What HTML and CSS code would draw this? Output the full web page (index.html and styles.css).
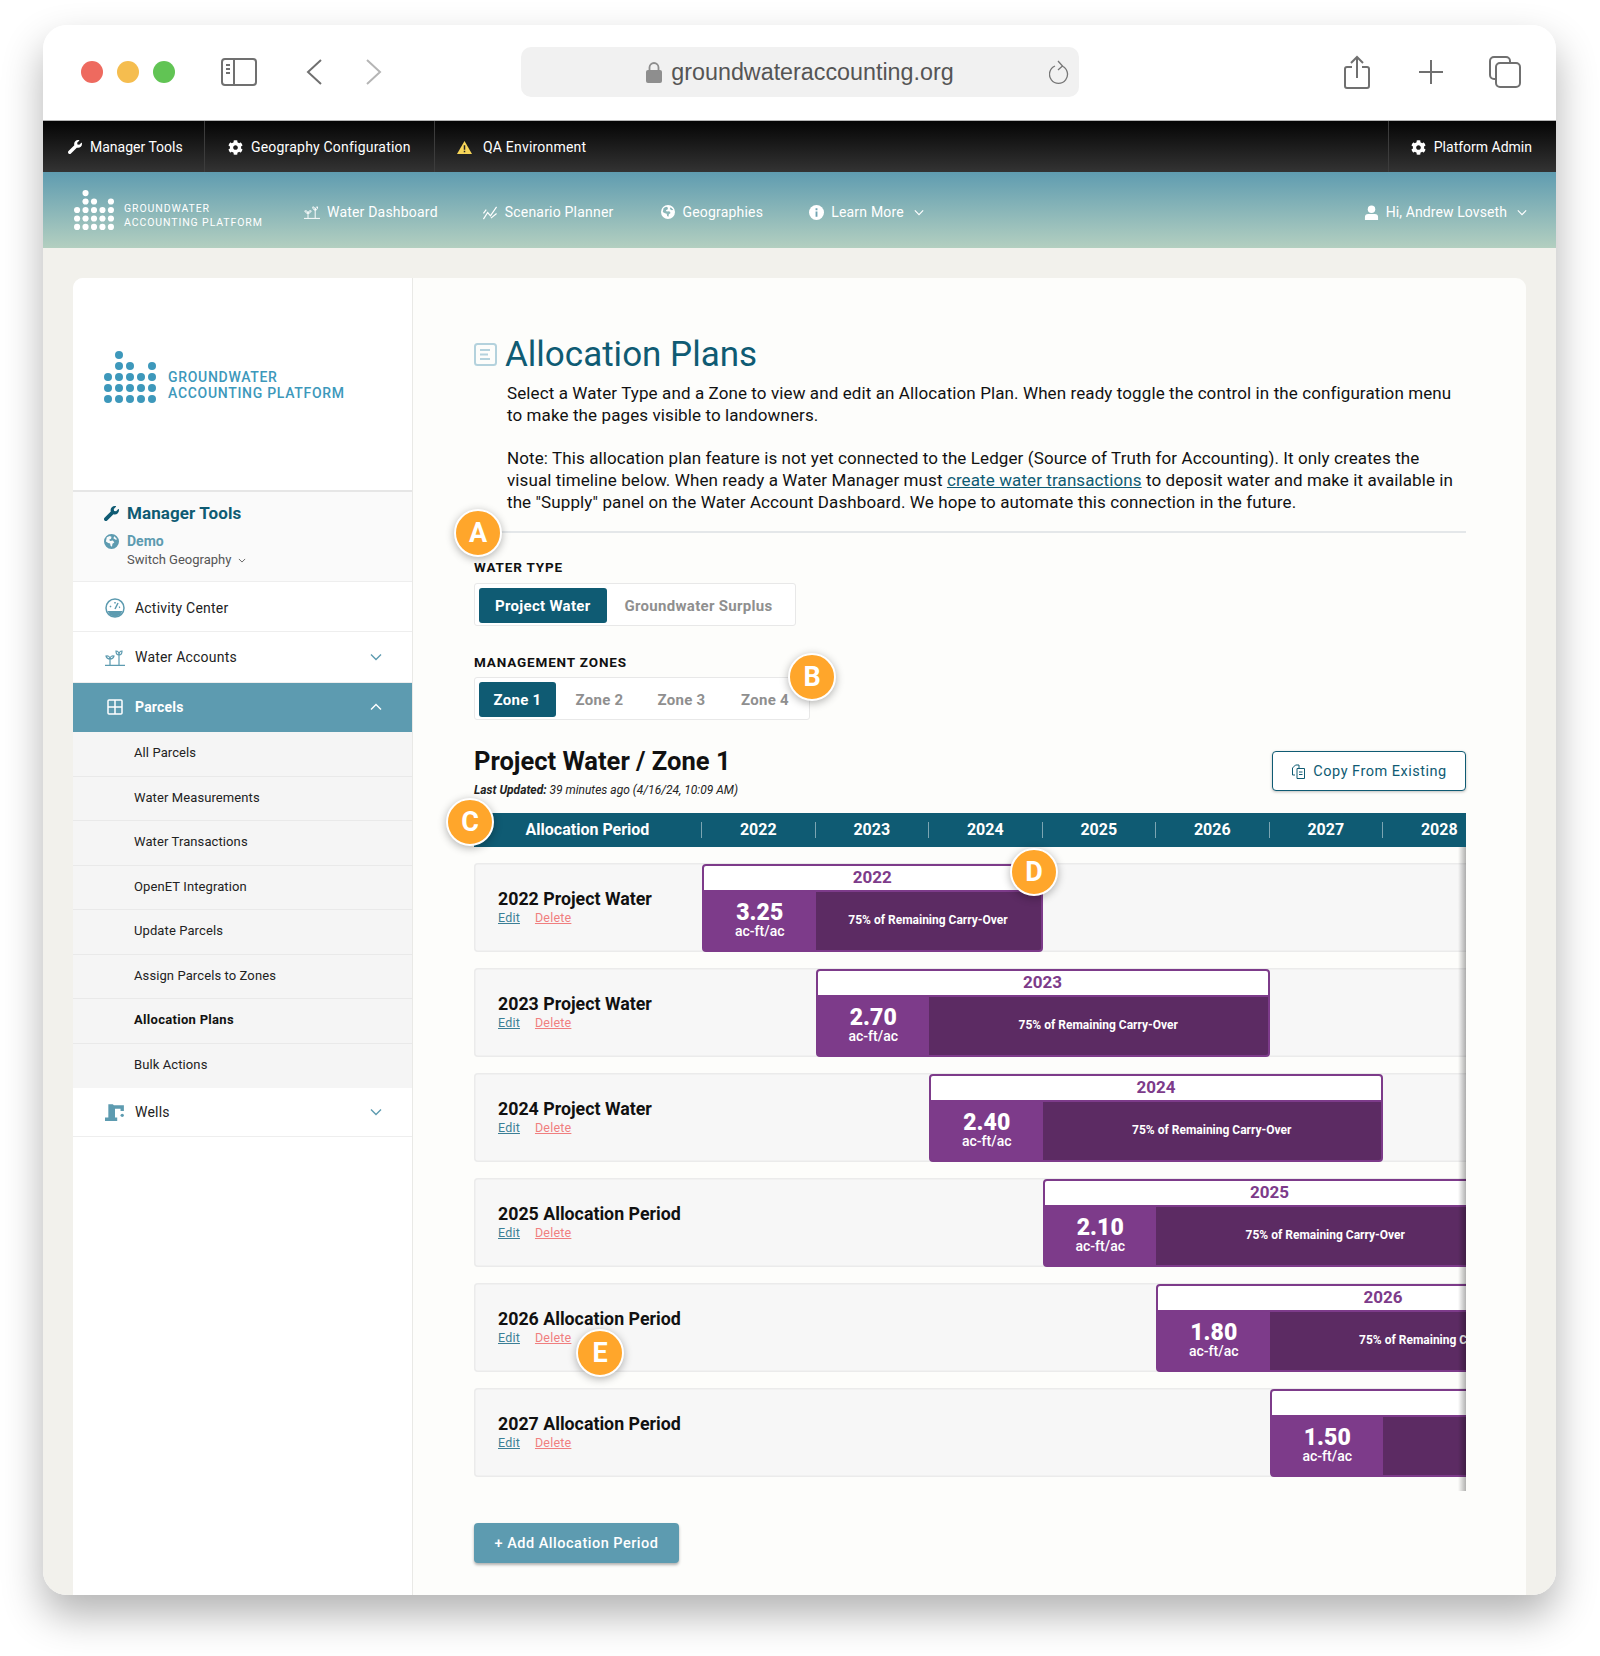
FILE: index.html

```html
<!DOCTYPE html>
<html lang="en">
<head>
  <meta charset="UTF-8">
  <title>Allocation Plans</title>
  <link rel="stylesheet" href="styles.css">
</head>
<body>
  <svg class="defs" width="0" height="0">
    <symbol id="dots" viewBox="0 0 52 52">
      <circle cx="15" cy="4" r="4"/>
      <circle cx="15" cy="15" r="4"/><circle cx="26" cy="15" r="4"/><circle cx="48" cy="15" r="4"/>
      <circle cx="4" cy="26" r="4"/><circle cx="15" cy="26" r="4"/><circle cx="26" cy="26" r="4"/><circle cx="37" cy="26" r="4"/><circle cx="48" cy="26" r="4"/>
      <circle cx="4" cy="37" r="4"/><circle cx="15" cy="37" r="4"/><circle cx="26" cy="37" r="4"/><circle cx="37" cy="37" r="4"/><circle cx="48" cy="37" r="4"/>
      <circle cx="4" cy="48" r="4"/><circle cx="15" cy="48" r="4"/><circle cx="26" cy="48" r="4"/><circle cx="37" cy="48" r="4"/><circle cx="48" cy="48" r="4"/>
    </symbol>
    <symbol id="wrench" viewBox="0 0 512 512">
      <path d="M507.73 109.1c-2.24-9.03-13.54-12.09-20.12-5.51l-74.36 74.36-67.88-11.31-11.31-67.88 74.36-74.36c6.62-6.62 3.43-17.9-5.66-20.16-47.38-11.74-99.55.91-136.58 37.93-39.64 39.64-50.55 97.1-34.05 147.2L18.74 402.76c-24.99 24.99-24.99 65.51 0 90.5 24.99 24.99 65.51 24.99 90.5 0l213.21-213.21c50.12 16.71 107.47 5.68 147.37-34.22 37.07-37.07 49.7-89.32 37.91-136.73z"/>
    </symbol>
    <symbol id="gear" viewBox="0 0 512 512">
      <path d="M487.4 315.7l-42.6-24.6c4.3-23.2 4.3-47 0-70.2l42.6-24.6c4.9-2.8 7.1-8.6 5.5-14-11.1-35.6-30-67.8-54.7-94.6-3.8-4.1-10-5.1-14.8-2.3L380.8 110c-17.9-15.4-38.5-27.3-60.8-35.1V25.8c0-5.6-3.9-10.5-9.4-11.7-36.7-8.2-74.3-7.8-109.2 0-5.5 1.2-9.4 6.1-9.4 11.7V75c-22.2 7.9-42.8 19.8-60.8 35.1L88.7 85.5c-4.9-2.8-11-1.9-14.8 2.3-24.7 26.7-43.6 58.9-54.7 94.6-1.7 5.4.6 11.2 5.5 14L67.3 221c-4.3 23.2-4.3 47 0 70.2l-42.6 24.6c-4.9 2.8-7.1 8.6-5.5 14 11.1 35.6 30 67.8 54.7 94.6 3.8 4.1 10 5.1 14.8 2.3l42.6-24.6c17.9 15.4 38.5 27.3 60.8 35.1v49.2c0 5.6 3.9 10.5 9.4 11.7 36.7 8.2 74.3 7.8 109.2 0 5.5-1.2 9.4-6.1 9.4-11.7v-49.2c22.2-7.9 42.8-19.8 60.8-35.1l42.6 24.6c4.9 2.8 11 1.9 14.8-2.3 24.7-26.7 43.6-58.9 54.7-94.6 1.5-5.5-.7-11.3-5.6-14.1zM256 336c-44.1 0-80-35.9-80-80s35.9-80 80-80 80 35.9 80 80-35.9 80-80 80z"/>
    </symbol>
    <symbol id="sprout" viewBox="0 0 20 16">
      <g fill="none" stroke="currentColor" stroke-width="1.200">
        <path d="M0 15.400h20M5 15V8M14 15V4"/>
        <path d="M5 9C3 9 1.500 8 1 6c2-.5 4 .5 4 3zM5 9c2 0 3.500-1 4-3-2-.5-4 .5-4 3zM14 5c-2 0-3-1.500-3-4 2 0 3 1.500 3 4zM14 5c2 0 3-1.500 3-4-2 0-3 1.500-3 4z"/>
      </g>
    </symbol>
    <symbol id="chart" viewBox="0 0 16 16">
      <path d="M1 15l4.500-7 3 3.500L15 2M1 9l3-4M9 14l6-5" fill="none" stroke="currentColor" stroke-width="1.300"/>
    </symbol>
    <symbol id="globe" viewBox="0 0 16 16">
      <path fill-rule="evenodd" d="M8 0a8 8 0 1 1 0 16A8 8 0 0 1 8 0zM3 3.500L2 8l2.500 1.500 2 .5.500 2.500 1.500 1 .5-3 2-1.500-1.500-2-3 .5-1-1.500 2-1 .5-2-2-1zM11 2.500l-1 2 2.500 1.500 1.500-.5z"/>
    </symbol>
    <symbol id="chevron" viewBox="0 0 12 8">
      <path d="M1 1.500l5 5 5-5" fill="none" stroke="currentColor" stroke-width="1.400"/>
    </symbol>
  </svg>

  <div class="window">
    <div class="chrome">
      <span class="light light-red"></span>
      <span class="light light-yellow"></span>
      <span class="light light-green"></span>
      <svg class="chrome-sidebar" width="36" height="28" viewBox="0 0 36 28" fill="none" stroke="#707070" stroke-width="2">
        <rect x="1" y="1" width="34" height="26" rx="3"/>
        <path d="M13 1v26M5 7h4M5 11h4M5 15h4"/>
      </svg>
      <svg class="chrome-back" width="16" height="26" viewBox="0 0 16 26" fill="none" stroke="#707070" stroke-width="2"><path d="M15 1L2 13l13 12"/></svg>
      <svg class="chrome-forward" width="16" height="26" viewBox="0 0 16 26" fill="none" stroke="#b5b5b5" stroke-width="2"><path d="M1 1l13 12L1 25"/></svg>
      <div class="address">
        <svg width="16" height="21" viewBox="0 0 16 21" fill="#8e8e8e"><rect y="8" width="16" height="13" rx="2"/><path d="M3.500 9V5.500a4.500 4.500 0 0 1 9 0V9" fill="none" stroke="#8e8e8e" stroke-width="1.800"/></svg>
        <span>groundwateraccounting.org</span>
        <svg class="reload" width="20" height="24" viewBox="0 0 20 24" fill="none" stroke="#777" stroke-width="1.300"><path d="M13 6a9 9 0 1 1-7 0M9 1l4.500 5L9 10"/></svg>
      </div>
      <div class="chrome-actions">
        <svg width="26" height="34" viewBox="0 0 26 34" fill="none" stroke="#707070" stroke-width="2"><path d="M8 12H3a2 2 0 0 0-2 2v17a2 2 0 0 0 2 2h20a2 2 0 0 0 2-2V14a2 2 0 0 0-2-2h-5M13 23V2M7 8l6-6 6 6"/></svg>
        <svg class="chrome-plus" width="26" height="26" viewBox="0 0 26 26" stroke="#707070" stroke-width="2"><path d="M13 1v24M1 13h24"/></svg>
        <svg width="32" height="32" viewBox="0 0 32 32" fill="none" stroke="#707070" stroke-width="2"><path d="M6 23H5a4 4 0 0 1-4-4V5a4 4 0 0 1 4-4h12a4 4 0 0 1 4 4v2"/><rect x="7" y="7" width="24" height="24" rx="4"/></svg>
      </div>
    </div>

    <div class="topbar">
      <a class="topbar-item topbar-tools"><svg class="ic14"><use href="#wrench"/></svg>Manager Tools</a>
      <a class="topbar-item topbar-geo"><svg class="ic15"><use href="#gear"/></svg>Geography Configuration</a>
      <a class="topbar-item topbar-qa">
        <svg class="ic15" viewBox="0 0 16 14"><path fill="#f7d558" d="M8 0l8 14H0z"/><path fill="#222" d="M7.200 4.500h1.600v5H7.200zM7.200 10.500h1.600v1.600H7.200z"/></svg>
        QA Environment
      </a>
      <a class="topbar-item topbar-admin"><svg class="ic15"><use href="#gear"/></svg>Platform Admin</a>
    </div>

    <div class="nav">
      <div class="nav-logo">
        <svg class="nav-dots"><use href="#dots"/></svg>
        <span>GROUNDWATER<br>ACCOUNTING PLATFORM</span>
      </div>
      <a class="nav-item"><svg class="ic16"><use href="#sprout"/></svg>Water Dashboard</a>
      <a class="nav-item nav-scenario"><svg class="ic16"><use href="#chart"/></svg>Scenario Planner</a>
      <a class="nav-item"><svg class="ic14"><use href="#globe"/></svg>Geographies</a>
      <a class="nav-item">
        <svg class="ic15" viewBox="0 0 16 16"><circle cx="8" cy="8" r="8" fill="#fff"/><path fill="#6fa3b2" d="M7 7h2v5.500H7zM7 3.500h2v2H7z"/></svg>
        Learn More<svg class="nav-chev"><use href="#chevron"/></svg>
      </a>
      <a class="nav-item nav-user">
        <svg class="ic15" viewBox="0 0 16 16" fill="#fff"><circle cx="8" cy="4.500" r="4"/><path d="M1 16v-3a3.500 3.500 0 0 1 3.500-3.500h7A3.500 3.500 0 0 1 15 13v3z"/></svg>
        Hi, Andrew Lovseth<svg class="nav-chev"><use href="#chevron"/></svg>
      </a>
    </div>

    <div class="page">
      <div class="card">
        <aside class="sidebar">
          <div class="side-logo">
            <svg class="side-dots"><use href="#dots"/></svg>
            <span>GROUNDWATER<br>ACCOUNTING PLATFORM</span>
          </div>
          <div class="side-tools">
            <div class="side-tools-title"><svg class="ic15"><use href="#wrench"/></svg>Manager Tools</div>
            <div class="side-demo"><svg class="ic15"><use href="#globe"/></svg>Demo</div>
            <div class="side-switch">Switch Geography<svg class="switch-chev"><use href="#chevron"/></svg></div>
          </div>
          <a class="side-item side-activity">
            <svg class="side-icon" viewBox="0 0 20 20" fill="none" stroke="#5d9bb0" stroke-width="1.500"><circle cx="10" cy="10" r="9"/><path d="M10 11l3-6M5 8l1 1M10 4v1.500M15 9l-1 .5"/><path fill="#5d9bb0" stroke="none" d="M2.500 13h15L15 17l-5 2-5-2z"/></svg>
            Activity Center
          </a>
          <a class="side-item side-water">
            <svg class="side-icon side-sprout"><use href="#sprout"/></svg>
            Water Accounts<svg class="side-chev"><use href="#chevron"/></svg>
          </a>
          <a class="side-item side-active">
            <svg class="side-icon" viewBox="0 0 16 16" fill="none" stroke="#fff" stroke-width="1.500"><rect x="1" y="1" width="14" height="14" rx="1"/><path d="M8 1v14M1 8h14"/></svg>
            Parcels<svg class="side-chev side-chev-up"><use href="#chevron"/></svg>
          </a>
          <div class="side-sub">
            <a>All Parcels</a>
            <a>Water Measurements</a>
            <a>Water Transactions</a>
            <a>OpenET Integration</a>
            <a>Update Parcels</a>
            <a>Assign Parcels to Zones</a>
            <a class="current">Allocation Plans</a>
            <a>Bulk Actions</a>
          </div>
          <a class="side-item side-wells">
            <svg class="side-icon" viewBox="0 0 18 16" fill="#5d9bb0"><path d="M3 1h4l1 1h9v5h-3V5H9v8h2v3H0v-3h3z"/><circle cx="15.500" cy="11" r="1.500"/></svg>
            Wells<svg class="side-chev"><use href="#chevron"/></svg>
          </a>
        </aside>

        <main class="content">
          <div class="title-row">
            <svg width="23" height="23" viewBox="0 0 23 23" fill="none" stroke="#b4d2dd" stroke-width="2"><rect x="1" y="1" width="21" height="21" rx="2.500"/><path d="M6 7h10M6 11.500h8M6 16h10"/></svg>
            <h1>Allocation Plans</h1>
          </div>
          <div class="intro">
            <p>Select a Water Type and a Zone to view and edit an Allocation Plan. When ready toggle the control in the configuration menu to make the pages visible to landowners.</p>
            <p>Note: This allocation plan feature is not yet connected to the Ledger (Source of Truth for Accounting). It only creates the visual timeline below. When ready a Water Manager must <a href="#">create water transactions</a> to deposit water and make it available in the "Supply" panel on the Water Account Dashboard. We hope to automate this connection in the future.</p>
          </div>

          <div class="field-label field-first">WATER TYPE</div>
          <div class="toggle">
            <button class="active pad-type">Project Water</button>
            <button class="pad-type">Groundwater Surplus</button>
          </div>

          <div class="field-label">MANAGEMENT ZONES</div>
          <div class="toggle">
            <button class="active">Zone 1</button>
            <button>Zone 2</button>
            <button>Zone 3</button>
            <button>Zone 4</button>
          </div>

          <div class="plan-head">
            <div>
              <h2>Project Water / Zone 1</h2>
              <div class="updated"><b>Last Updated:</b> 39 minutes ago (4/16/24, 10:09 AM)</div>
            </div>
            <button class="copy-btn">
              <svg width="14" height="15" viewBox="0 0 14 15" fill="none" stroke="#0f5b73" stroke-width="1"><path d="M4 11H1.500V4L4.500 1H8v3"/><path d="M6 4.500h7.500v10H6zM8 8h3.500M8 10.500h3.500"/></svg>
              Copy From Existing
            </button>
          </div>

          <div class="timeline-head">
            <div class="th-name">Allocation Period</div>
            <div>2022</div><div>2023</div><div>2024</div><div>2025</div><div>2026</div><div>2027</div><div>2028</div>
          </div>

          <div class="timeline">
            <div class="period">
              <div class="period-name"><h3>2022 Project Water</h3><a>Edit</a><a class="del">Delete</a></div>
              <div class="bar span-3 start-2">
                <div class="bar-year">2022</div>
                <div class="bar-body"><div class="bar-value"><b>3.25</b>ac-ft/ac</div><div class="bar-note">75% of Remaining Carry-Over</div></div>
              </div>
            </div>
            <div class="period">
              <div class="period-name"><h3>2023 Project Water</h3><a>Edit</a><a class="del">Delete</a></div>
              <div class="bar start-3">
                <div class="bar-year">2023</div>
                <div class="bar-body"><div class="bar-value"><b>2.70</b>ac-ft/ac</div><div class="bar-note">75% of Remaining Carry-Over</div></div>
              </div>
            </div>
            <div class="period">
              <div class="period-name"><h3>2024 Project Water</h3><a>Edit</a><a class="del">Delete</a></div>
              <div class="bar start-4">
                <div class="bar-year">2024</div>
                <div class="bar-body"><div class="bar-value"><b>2.40</b>ac-ft/ac</div><div class="bar-note">75% of Remaining Carry-Over</div></div>
              </div>
            </div>
            <div class="period">
              <div class="period-name"><h3>2025 Allocation Period</h3><a>Edit</a><a class="del">Delete</a></div>
              <div class="bar start-5">
                <div class="bar-year">2025</div>
                <div class="bar-body"><div class="bar-value"><b>2.10</b>ac-ft/ac</div><div class="bar-note">75% of Remaining Carry-Over</div></div>
              </div>
            </div>
            <div class="period">
              <div class="period-name"><h3>2026 Allocation Period</h3><a>Edit</a><a class="del">Delete</a></div>
              <div class="bar start-6">
                <div class="bar-year">2026</div>
                <div class="bar-body"><div class="bar-value"><b>1.80</b>ac-ft/ac</div><div class="bar-note">75% of Remaining Carry-Over</div></div>
              </div>
            </div>
            <div class="period">
              <div class="period-name"><h3>2027 Allocation Period</h3><a>Edit</a><a class="del">Delete</a></div>
              <div class="bar start-7">
                <div class="bar-year">2027</div>
                <div class="bar-body"><div class="bar-value"><b>1.50</b>ac-ft/ac</div><div class="bar-note">75% of Remaining Carry-Over</div></div>
              </div>
            </div>
          </div>

          <button class="add-btn">+ Add Allocation Period</button>
        </main>
      </div>
    </div>

    <span class="badge badge-a">A</span>
    <span class="badge badge-b">B</span>
    <span class="badge badge-c">C</span>
    <span class="badge badge-d">D</span>
    <span class="badge badge-e">E</span>
  </div>
</body>
</html>
```

FILE: styles.css

```css
* {
  margin: 0;
  padding: 0;
  box-sizing: border-box;
}

body {
  background: #fff;
  font-family: Roboto, "Liberation Sans", sans-serif;
  color: #111;
  padding: 25px 0 61px 43px;
}

button {
  font-family: inherit;
  border: none;
}

.defs {
  position: absolute;
}

svg {
  flex: none;
}

use {
  fill: currentColor;
}

.ic14 { width: 14px; height: 14px; }
.ic15 { width: 15px; height: 15px; }
.ic16 { width: 16px; height: 15px; }

/* window */
.window {
  position: relative;
  width: 1513px;
  height: 1570px;
  border-radius: 24px;
  overflow: hidden;
  display: flex;
  flex-direction: column;
  box-shadow: 0 20px 40px rgba(0, 0, 0, 0.3);
}

.chrome {
  height: 95px;
  background: #fff;
  display: flex;
  align-items: center;
  padding: 0 35px 2px 38px;
  flex: none;
}

.light {
  width: 22px;
  height: 22px;
  border-radius: 50%;
  margin-right: 14px;
}

.light-red { background: #ee6a5f; }
.light-yellow { background: #f5bd4f; }
.light-green { background: #61c454; }

.chrome-sidebar { margin-left: 32px; }
.chrome-back { margin-left: 49px; }
.chrome-forward { margin-left: 44px; }

.address {
  width: 558px;
  height: 50px;
  margin-left: 139px;
  padding-top: 2px;
  background: #f1f1f1;
  border-radius: 10px;
  display: flex;
  align-items: center;
  justify-content: center;
  gap: 9px;
  font-family: "Liberation Sans", sans-serif;
  font-size: 23.300px;
  color: #555;
  position: relative;
}

.reload {
  position: absolute;
  right: 10px;
  top: 13px;
}

.chrome-actions {
  margin-left: auto;
  display: flex;
  align-items: center;
  gap: 45px;
}

.chrome-plus { margin-left: 3px; }

.topbar {
  height: 52px;
  flex: none;
  background: linear-gradient(180deg, #050505 0%, #333 100%);
  border-top: 1px solid #b5b5b5;
  display: flex;
  color: #fff;
  font-size: 14px;
  letter-spacing: 0.200px;
  white-space: nowrap;
}

.topbar-item {
  display: flex;
  align-items: center;
  gap: 8px;
  padding: 1px 0 0 25px;
  width: 162px;
  border-right: 1px solid #3c3c3c;
}

.topbar-tools { letter-spacing: 0; }
.topbar-geo { width: 230px; padding-left: 23px; }
.topbar-qa { width: auto; border-right: none; padding-left: 22px; gap: 11px; }
.topbar-admin {
  width: auto;
  margin-left: auto;
  border-right: none;
  border-left: 1px solid #3c3c3c;
  padding: 1px 24px 0 22px;
  letter-spacing: 0;
}

.nav {
  height: 76px;
  flex: none;
  background: linear-gradient(180deg, #5f9cb0 0%, #b3cfc0 100%);
  color: #fff;
  display: flex;
  align-items: center;
  gap: 46px;
  padding: 4px 29px 0 30px;
  font-size: 14px;
  letter-spacing: 0.200px;
  white-space: nowrap;
}

.nav-logo {
  display: flex;
  align-items: flex-end;
  gap: 9px;
  width: 189px;
  margin: -4px -4px 0 0;
  font-size: 10.500px;
  letter-spacing: 0.900px;
  line-height: 14px;
}

.nav-dots { width: 42px; height: 40px; }

.nav-item {
  display: flex;
  align-items: center;
  gap: 7px;
}

.nav-scenario { margin: 0 2px 0 -2px; }

.nav-chev {
  width: 10px;
  height: 7px;
  margin-left: 3px;
  margin-top: 1px;
}

.nav-user { margin-left: auto; letter-spacing: 0.100px; }

/* page */
.page {
  flex: 1;
  background: #f2f1ec;
  padding: 30px 30px 0;
  display: flex;
  min-height: 0;
}

.card {
  flex: 1;
  min-width: 0;
  background: #fdfdfb;
  border-radius: 10px 10px 0 0;
  display: flex;
}

.sidebar {
  width: 340px;
  flex: none;
  background: #fff;
  border-right: 1px solid #e9e9e6;
  border-radius: 10px 0 0 0;
}

.side-logo {
  height: 214px;
  padding: 73px 0 0 31px;
  display: flex;
  align-items: flex-start;
  gap: 12px;
  color: #3d98bb;
  font-size: 14px;
  font-weight: 500;
  letter-spacing: 0.700px;
  line-height: 16px;
  border-bottom: 2px solid #e6e6e6;
}

.side-logo span { margin-top: 18px; }
.side-dots { width: 52px; height: 52px; }

.side-tools {
  height: 90px;
  background: #fafafa;
  border-bottom: 1px solid #eee;
  padding: 10px 0 0 31px;
}

.side-tools-title {
  display: flex;
  align-items: center;
  gap: 8px;
  color: #0f5b73;
  font-size: 17px;
  font-weight: 700;
  letter-spacing: 0.100px;
  line-height: 22px;
}

.side-demo {
  display: flex;
  align-items: center;
  gap: 8px;
  color: #5d9bb0;
  font-size: 14px;
  font-weight: 700;
  line-height: 18px;
  margin-top: 8px;
}

.side-switch {
  color: #555;
  font-size: 13px;
  line-height: 18px;
  padding-left: 23px;
  margin-top: 1px;
}

.switch-chev {
  width: 8px;
  height: 5px;
  margin-left: 7px;
  margin-bottom: 1px;
}

.side-item {
  height: 50px;
  display: flex;
  align-items: center;
  padding: 0 30px 0 32px;
  font-size: 14px;
  letter-spacing: 0.200px;
  color: #222;
  border-bottom: 1px solid #eee;
}

.side-activity { padding-top: 2px; }

.side-icon {
  width: 20px;
  height: 20px;
  margin-right: 10px;
  color: #5d9bb0;
}

.side-sprout { height: 16px; margin-top: 3px; }

.side-water { height: 51px; padding-bottom: 1px; }

.side-chev {
  width: 12px;
  height: 8px;
  margin-left: auto;
  color: #5d9bb0;
}

.side-active {
  height: 49px;
  background: #5d9bb0;
  color: #fff;
  font-weight: 700;
  border-bottom: none;
  padding-bottom: 2px;
}

.side-active .side-icon { width: 16px; height: 16px; margin: 0 12px 0 2px; }
.side-chev-up { transform: rotate(180deg); color: #fff; }

.side-sub a {
  height: 44.500px;
  display: flex;
  align-items: center;
  padding: 0 0 2px 61px;
  font-size: 13px;
  letter-spacing: 0.100px;
  color: #222;
  background: #f5f5f5;
  border-bottom: 1px solid #e9e9e9;
}

.side-sub a.current { font-weight: 700; color: #111; letter-spacing: 0.300px; }
.side-sub a:last-child { border-bottom: none; }

.side-wells { height: 49px; }

/* main */
.content {
  flex: 1;
  min-width: 0;
  padding: 54px 60px 0 61px;
}

.title-row {
  display: flex;
  align-items: center;
  gap: 8px;
  height: 44px;
}

h1 {
  font-size: 35px;
  font-weight: 400;
  color: #0f5b73;
}

.intro {
  margin-top: 7px;
  font-size: 17px;
  letter-spacing: 0.100px;
  line-height: 21.700px;
  padding-bottom: 18px;
  border-bottom: 2px solid #e4e7e9;
}

.intro p { margin-left: 33px; max-width: 950px; }
.intro p + p { margin-top: 21.700px; }
.intro a { color: #0f5b73; }

.field-label {
  font-size: 13.500px;
  font-weight: 700;
  letter-spacing: 0.850px;
  line-height: 16px;
  margin: 28px 0 7px;
}

.field-first { margin: 26px 0 8px; }

.toggle {
  display: inline-flex;
  vertical-align: top;
  height: 43px;
  padding: 4px;
  background: #fff;
  border: 1px solid #e8e8e8;
  border-radius: 3px;
}

.toggle button {
  height: 35px;
  width: 77px;
  margin-right: 5px;
  background: transparent;
  font-size: 15px;
  font-weight: 700;
  color: #8f8f8f;
  letter-spacing: 0.300px;
}

.toggle button:last-child { margin-right: 0; width: 80px; }
.toggle button.active { background: #0f5b73; color: #fff; border-radius: 3px; }
.toggle button.pad-type { width: auto; padding: 0 16px; margin: 0; }
.toggle .active + button.pad-type { padding: 0 18px; }

.plan-head {
  display: flex;
  justify-content: space-between;
  align-items: flex-start;
  margin-top: 31px;
  height: 62px;
}

h2 {
  font-size: 25.500px;
  font-weight: 700;
  line-height: 20px;
}

.updated {
  margin-top: 11px;
  font-size: 12px;
  font-style: italic;
  line-height: 16px;
  color: #222;
}

.copy-btn {
  width: 194px;
  height: 40px;
  background: #fff;
  border: 1px solid #0f5b73;
  border-radius: 4px;
  color: #0f5b73;
  font-size: 14.500px;
  letter-spacing: 0.500px;
  display: flex;
  align-items: center;
  justify-content: center;
  gap: 8px;
  box-shadow: 0 1px 3px rgba(0, 0, 0, 0.25);
}

.timeline-head {
  height: 34px;
  background: #0f5b73;
  color: #fff;
  font-size: 16px;
  font-weight: 700;
  display: grid;
  grid-template-columns: 228px repeat(7, 113.500px);
  align-items: center;
  text-align: center;
  overflow: hidden;
}

.timeline-head div {
  line-height: 16px;
  border-right: 1px solid rgba(255, 255, 255, 0.45);
}

.timeline {
  position: relative;
  overflow: hidden;
  padding: 16px 0 14px;
  display: flex;
  flex-direction: column;
  gap: 16px;
}

.timeline::after {
  content: "";
  position: absolute;
  top: 0;
  bottom: 0;
  right: 0;
  width: 8px;
  background: linear-gradient(90deg, rgba(0, 0, 0, 0), rgba(0, 0, 0, 0.3));
}

.period {
  width: 1600px;
  height: 89px;
  flex: none;
  display: grid;
  grid-template-columns: 228px repeat(12, 113.500px);
  background: #f7f7f7;
  box-shadow: inset 0 0 0 1.500px #ebebeb;
  border-radius: 4px;
}

.period-name {
  grid-column: 1;
  grid-row: 1;
  padding: 27px 0 0 24px;
  min-width: 0;
  white-space: nowrap;
  font-size: 12.500px;
  letter-spacing: 0.200px;
}

.period-name h3 {
  font-size: 17.800px;
  font-weight: 700;
  letter-spacing: 0;
  line-height: 18px;
  margin-bottom: 1.500px;
}

.period-name a {
  color: #3c7f96;
  text-decoration: underline;
  margin-right: 15px;
}

.period-name a.del { color: #f07f7f; }

.bar {
  grid-row: 1;
  grid-column-end: span 4;
  border: 2px solid #7d3b8a;
  border-radius: 4px;
  background: #7d3b8a;
  overflow: hidden;
  margin-top: 1px;
  display: flex;
  flex-direction: column;
}

.bar.span-3 { grid-column-end: span 3; }
.start-2 { grid-column-start: 2; }
.start-3 { grid-column-start: 3; }
.start-4 { grid-column-start: 4; }
.start-5 { grid-column-start: 5; }
.start-6 { grid-column-start: 6; }
.start-7 { grid-column-start: 7; }

.bar-year {
  height: 24px;
  background: #fff;
  color: #7d3b8a;
  font-size: 17px;
  font-weight: 700;
  line-height: 23px;
  text-align: center;
}

.bar-body {
  flex: 1;
  display: flex;
  color: #fff;
  margin-top: 2px;
}

.bar-value {
  width: 111.500px;
  flex: none;
  text-align: center;
  font-size: 14px;
  font-weight: 500;
  line-height: 15px;
  padding-top: 10px;
}

.bar-value b {
  display: block;
  font-size: 23px;
  font-weight: 900;
  line-height: 22px;
}

.bar-note {
  flex: 1;
  background: #5c2b63;
  display: flex;
  align-items: center;
  justify-content: center;
  padding-bottom: 2px;
  font-size: 12px;
  font-weight: 700;
  white-space: nowrap;
}

.add-btn {
  display: block;
  width: 205px;
  height: 40px;
  margin-top: 32px;
  background: #5d9bb0;
  color: #fff;
  font-size: 14.500px;
  font-weight: 500;
  letter-spacing: 0.500px;
  border-radius: 4px;
  box-shadow: 0 2px 3px rgba(0, 0, 0, 0.3);
}

/* callouts */
.badge {
  position: absolute;
  width: 48px;
  height: 48px;
  border-radius: 50%;
  background: #ffa62b;
  border: 2px solid #fff;
  box-shadow: 0 2px 8px rgba(0, 0, 0, 0.3);
  color: #fff;
  font-size: 27px;
  font-weight: 700;
  display: flex;
  align-items: center;
  justify-content: center;
}

.badge-a { left: 411px; top: 484px; }
.badge-b { left: 745px; top: 628px; }
.badge-c { left: 403px; top: 773px; }
.badge-d { left: 967px; top: 823px; }
.badge-e { left: 533px; top: 1304px; }
```
